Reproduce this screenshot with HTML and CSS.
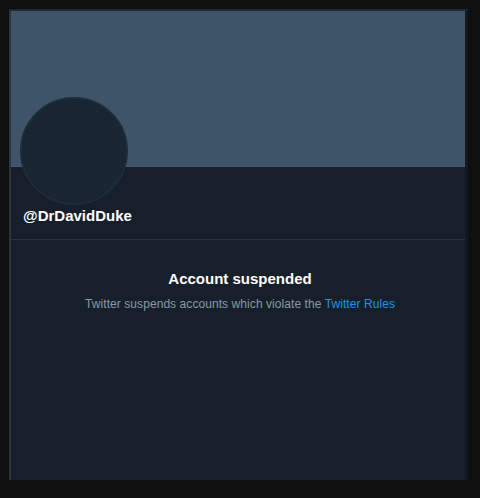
FILE: index.html
```html
<!DOCTYPE html>
<html lang="en">
<head>
    <meta charset="UTF-8">
    <meta name="viewport" content="width=device-width, initial-scale=1.0">
    <title>@DrDavidDuke</title>
    <link rel="stylesheet" href="styles.css">
</head>
<body>
    <div class="frame">
        <div class="banner"></div>
        <div class="profile">
            <div class="avatar"></div>
            <div class="handle">@DrDavidDuke</div>
        </div>
        <div class="notice">
            <h2 class="title">Account suspended</h2>
            <p class="desc">Twitter suspends accounts which violate the <a href="#" class="link">Twitter Rules</a></p>
        </div>
    </div>
</body>
</html>
```

FILE: styles.css
```css
html, body{
    margin: 0;
    height: 100%;
}
body{
    background-color: #0f0f0f;
    padding: 9px 12px 18px 9px;
    box-sizing: border-box;
    font-family: "Liberation Sans", Arial, sans-serif;
}
.frame{
    height: 471px;
    background-color: #17202a;
    border-left: 2px solid #2c3742;
    border-top: 2px solid #1f2a35;
    border-right: 3px solid #111820;
    box-sizing: border-box;
    display: flex;
    flex-direction: column;
}
.banner{
    height: 155px;
    background-color: #3e5469;
    border-bottom: 1px solid #46596b;
}
.profile{
    padding: 0 12px 13px 12px;
    border-bottom: 1px solid #2a3540;
}
.avatar{
    width: 104px;
    height: 104px;
    margin-top: -70px;
    margin-left: -3px;
    border-radius: 50%;
    background-color: #182533;
    border: 2px solid #1e2c3a;
}
.handle{
    margin-top: 1px;
    color: #ffffff;
    font-weight: bold;
    font-size: 15px;
    line-height: 20px;
}
.notice{
    text-align: center;
    padding: 29px 0 0 4px;
}
.title{
    margin: 0;
    color: #ffffff;
    font-size: 15px;
    line-height: 20px;
    font-weight: bold;
}
.desc{
    margin: 7px 0 0 0;
    color: #8899a6;
    font-size: 12px;
    line-height: 16px;
    letter-spacing: 0.07px;
}
.link{
    color: #1b95e0;
    text-decoration: none;
}
```
